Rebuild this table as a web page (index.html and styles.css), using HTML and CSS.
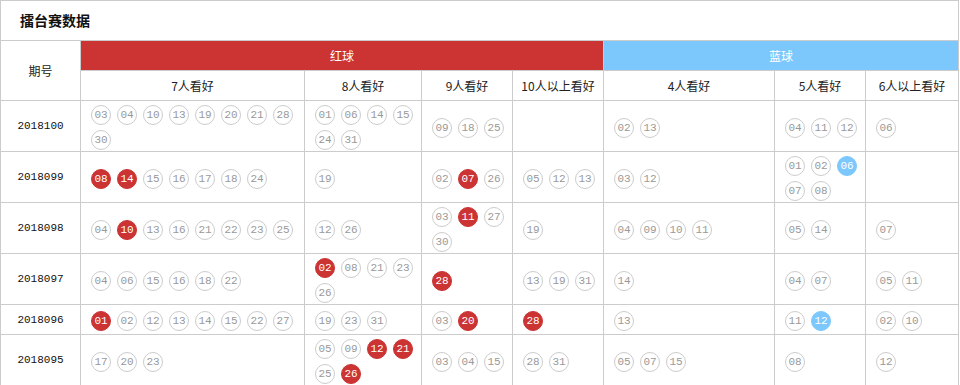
FILE: index.html
```html
<!DOCTYPE html>
<html lang="zh-CN">
<head>
<meta charset="utf-8">
<title>擂台赛数据</title>
<link rel="stylesheet" href="styles.css">
</head>
<body>
<div class="panel">
  <div class="title">擂台赛数据</div>
  <table class="grid">
    <colgroup>
      <col class="c-period"><col class="c-r7"><col class="c-r8"><col class="c-r9"><col class="c-r10"><col class="c-b4"><col class="c-b5"><col class="c-b6">
    </colgroup>
    <thead>
      <tr class="h1">
        <th rowspan="2" class="period-head">期号</th>
        <th colspan="4" class="red-head">红球</th>
        <th colspan="3" class="blue-head">蓝球</th>
      </tr>
      <tr class="h2">
        <th>7人看好</th><th>8人看好</th><th>9人看好</th><th>10人以上看好</th>
        <th>4人看好</th><th>5人看好</th><th>6人以上看好</th>
      </tr>
    </thead>
    <tbody>
      <tr>
        <td class="period">2018100</td>
        <td><div class="balls"><span class="ball">03</span><span class="ball">04</span><span class="ball">10</span><span class="ball">13</span><span class="ball">19</span><span class="ball">20</span><span class="ball">21</span><span class="ball">28</span><span class="ball">30</span></div></td>
        <td><div class="balls"><span class="ball">01</span><span class="ball">06</span><span class="ball">14</span><span class="ball">15</span><span class="ball">24</span><span class="ball">31</span></div></td>
        <td><div class="balls"><span class="ball">09</span><span class="ball">18</span><span class="ball">25</span></div></td>
        <td><div class="balls"></div></td>
        <td><div class="balls"><span class="ball">02</span><span class="ball">13</span></div></td>
        <td><div class="balls"><span class="ball">04</span><span class="ball">11</span><span class="ball">12</span></div></td>
        <td><div class="balls"><span class="ball">06</span></div></td>
      </tr>
      <tr>
        <td class="period">2018099</td>
        <td><div class="balls"><span class="ball red">08</span><span class="ball red">14</span><span class="ball">15</span><span class="ball">16</span><span class="ball">17</span><span class="ball">18</span><span class="ball">24</span></div></td>
        <td><div class="balls"><span class="ball">19</span></div></td>
        <td><div class="balls"><span class="ball">02</span><span class="ball red">07</span><span class="ball">26</span></div></td>
        <td><div class="balls"><span class="ball">05</span><span class="ball">12</span><span class="ball">13</span></div></td>
        <td><div class="balls"><span class="ball">03</span><span class="ball">12</span></div></td>
        <td><div class="balls"><span class="ball">01</span><span class="ball">02</span><span class="ball blue">06</span><span class="ball">07</span><span class="ball">08</span></div></td>
        <td><div class="balls"></div></td>
      </tr>
      <tr>
        <td class="period">2018098</td>
        <td><div class="balls"><span class="ball">04</span><span class="ball red">10</span><span class="ball">13</span><span class="ball">16</span><span class="ball">21</span><span class="ball">22</span><span class="ball">23</span><span class="ball">25</span></div></td>
        <td><div class="balls"><span class="ball">12</span><span class="ball">26</span></div></td>
        <td><div class="balls"><span class="ball">03</span><span class="ball red">11</span><span class="ball">27</span><span class="ball">30</span></div></td>
        <td><div class="balls"><span class="ball">19</span></div></td>
        <td><div class="balls"><span class="ball">04</span><span class="ball">09</span><span class="ball">10</span><span class="ball">11</span></div></td>
        <td><div class="balls"><span class="ball">05</span><span class="ball">14</span></div></td>
        <td><div class="balls"><span class="ball">07</span></div></td>
      </tr>
      <tr>
        <td class="period">2018097</td>
        <td><div class="balls"><span class="ball">04</span><span class="ball">06</span><span class="ball">15</span><span class="ball">16</span><span class="ball">18</span><span class="ball">22</span></div></td>
        <td><div class="balls"><span class="ball red">02</span><span class="ball">08</span><span class="ball">21</span><span class="ball">23</span><span class="ball">26</span></div></td>
        <td><div class="balls"><span class="ball red">28</span></div></td>
        <td><div class="balls"><span class="ball">13</span><span class="ball">19</span><span class="ball">31</span></div></td>
        <td><div class="balls"><span class="ball">14</span></div></td>
        <td><div class="balls"><span class="ball">04</span><span class="ball">07</span></div></td>
        <td><div class="balls"><span class="ball">05</span><span class="ball">11</span></div></td>
      </tr>
      <tr>
        <td class="period">2018096</td>
        <td><div class="balls"><span class="ball red">01</span><span class="ball">02</span><span class="ball">12</span><span class="ball">13</span><span class="ball">14</span><span class="ball">15</span><span class="ball">22</span><span class="ball">27</span></div></td>
        <td><div class="balls"><span class="ball">19</span><span class="ball">23</span><span class="ball">31</span></div></td>
        <td><div class="balls"><span class="ball">03</span><span class="ball red">20</span></div></td>
        <td><div class="balls"><span class="ball red">28</span></div></td>
        <td><div class="balls"><span class="ball">13</span></div></td>
        <td><div class="balls"><span class="ball">11</span><span class="ball blue">12</span></div></td>
        <td><div class="balls"><span class="ball">02</span><span class="ball">10</span></div></td>
      </tr>
      <tr>
        <td class="period">2018095</td>
        <td><div class="balls"><span class="ball">17</span><span class="ball">20</span><span class="ball">23</span></div></td>
        <td><div class="balls"><span class="ball">05</span><span class="ball">09</span><span class="ball red">12</span><span class="ball red">21</span><span class="ball">25</span><span class="ball red">26</span></div></td>
        <td><div class="balls"><span class="ball">03</span><span class="ball">04</span><span class="ball">15</span></div></td>
        <td><div class="balls"><span class="ball">28</span><span class="ball">31</span></div></td>
        <td><div class="balls"><span class="ball">05</span><span class="ball">07</span><span class="ball">15</span></div></td>
        <td><div class="balls"><span class="ball">08</span></div></td>
        <td><div class="balls"><span class="ball">12</span></div></td>
      </tr>
    </tbody>
  </table>
</div>
</body>
</html>
```
FILE: styles.css
```css
html, body {
  margin: 0;
  padding: 0;
  background: #fff;
}
body {
  font-family: "Noto Sans CJK SC", "Noto Sans", sans-serif;
  font-size: 12px;
  color: #222;
}
.panel {
  width: 959px;
}
.title {
  height: 39px;
  line-height: 39px;
  border: 1px solid #ccc;
  border-bottom: 0;
  padding-left: 19px;
  font-size: 14px;
  font-weight: bold;
  color: #111;
}
.grid {
  width: 959px;
  border-collapse: collapse;
  table-layout: fixed;
}
.grid th, .grid td {
  border: 1px solid #ccc;
  padding: 0;
}
.c-period { width: 80px; }
.c-r7 { width: 224px; }
.c-r8 { width: 117px; }
.c-r9 { width: 91px; }
.c-r10 { width: 91px; }
.c-b4 { width: 171px; }
.c-b5 { width: 91px; }
.c-b6 { width: 93px; }
.grid th {
  height: 29px;
  font-weight: normal;
  font-size: 12px;
  text-align: center;
  vertical-align: middle;
  color: #222;
}
.grid .red-head {
  background: #cc3333;
  color: #fff;
}
.grid .blue-head {
  background: #7cc8fc;
  color: #fff;
}
.grid td {
  height: 29px;
  vertical-align: middle;
}
.grid td.period {
  text-align: center;
  font-family: "Liberation Mono", monospace;
  font-size: 11px;
  color: #111;
}
.balls {
  display: flex;
  flex-wrap: wrap;
  gap: 5px 6px;
  padding: 4px 0 1px 10px;
}
.ball {
  box-sizing: border-box;
  width: 20px;
  height: 20px;
  border: 1px solid #ccc;
  border-radius: 50%;
  text-align: center;
  line-height: 18px;
  font-family: "Liberation Mono", monospace;
  font-size: 11px;
  color: #999;
}
.ball.red {
  background: #cc3333;
  border-color: #cc3333;
  color: #fff;
}
.ball.blue {
  background: #7cc8fc;
  border-color: #7cc8fc;
  color: #fff;
}
```
